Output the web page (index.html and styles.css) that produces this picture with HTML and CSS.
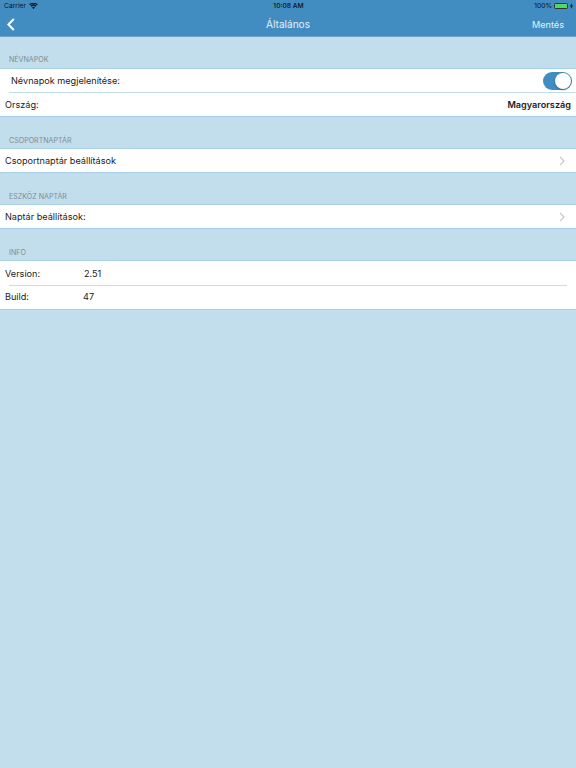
FILE: index.html
```html
<!DOCTYPE html>
<html lang="hu">
<head>
<meta charset="utf-8">
<title>Általános</title>
<link rel="stylesheet" href="styles.css">
</head>
<body>
<header class="top">
  <div class="status">
    <div class="status-left">
      <span>Carrier</span>
      <svg class="wifi" width="9" height="6" viewBox="0 0 10 7"><path d="M5 7 3.4 5.2a2.3 2.3 0 0 1 3.2 0zM2.6 4.4 1.5 3.2a5 5 0 0 1 7 0L7.4 4.4a3.5 3.5 0 0 0-4.8 0zM.9 2.6 0 1.6a7.2 7.2 0 0 1 10 0l-.9 1a6 6 0 0 0-8.2 0z" fill="#111"/></svg>
    </div>
    <div class="status-time">10:08 AM</div>
    <div class="status-right">
      <span>100%</span>
      <span class="battery"><span class="battery-fill"></span></span>
      <svg width="3" height="6" viewBox="0 0 3 6"><path d="M1.8 0 0 3.4h1.2L1 6l2-3.6H1.7z" fill="#111"/></svg>
    </div>
  </div>
  <nav class="nav">
    <svg class="back" width="8" height="13" viewBox="0 0 8 13"><path d="M6.8 1 1.4 6.5l5.4 5.5" fill="none" stroke="#fff" stroke-width="2"/></svg>
    <div class="nav-title">Általános</div>
    <div class="nav-action">Mentés</div>
  </nav>
</header>
<main>
  <h2 class="label label-first">NÉVNAPOK</h2>
  <section class="group">
    <div class="row row-indent">
      <span>Névnapok megjelenítése:</span>
      <span class="switch"><span class="knob"></span></span>
    </div>
    <div class="row row-divided">
      <span>Ország:</span>
      <strong class="value">Magyarország</strong>
    </div>
  </section>
  <h2 class="label">CSOPORTNAPTÁR</h2>
  <section class="group">
    <div class="row">
      <span>Csoportnaptár beállítások</span>
      <svg class="chev" width="6" height="10" viewBox="0 0 6 10"><path d="M1 1l4 4-4 4" fill="none" stroke="#c7c7cc" stroke-width="1.2"/></svg>
    </div>
  </section>
  <h2 class="label">ESZKÖZ NAPTÁR</h2>
  <section class="group">
    <div class="row">
      <span>Naptár beállítások:</span>
      <svg class="chev" width="6" height="10" viewBox="0 0 6 10"><path d="M1 1l4 4-4 4" fill="none" stroke="#c7c7cc" stroke-width="1.2"/></svg>
    </div>
  </section>
  <h2 class="label">INFO</h2>
  <section class="group">
    <div class="row row-info row-tall">
      <span class="info-key">Version:</span>
      <span class="info-version">2.51</span>
    </div>
    <div class="row row-info row-divided-short">
      <span class="info-key">Build:</span>
      <span class="info-build">47</span>
    </div>
  </section>
</main>
</body>
</html>
```
FILE: styles.css
```css
* { box-sizing: border-box; }
html, body { margin: 0; height: 100%; }
body {
  background: #c2deec;
  font-family: Inter, "Liberation Sans", sans-serif;
  color: #222;
  overflow: hidden;
}
.top {
  height: 37px;
  background: #418cc0;
  border-bottom: 1px solid #6aa5cd;
}
.status {
  height: 12px;
  display: grid;
  grid-template-columns: 1fr auto 1fr;
  align-items: center;
  padding: 0 3px 0 4px;
  font-size: 6.7px;
  color: #111;
}
.status-left { display: flex; align-items: center; gap: 3px; }
.status-right { display: flex; align-items: center; justify-content: flex-end; gap: 2px; }
.status-time { font-weight: 500; }
.battery {
  width: 14px;
  height: 6px;
  border: 1px solid #333;
  border-radius: 1.5px;
  display: block;
}
.battery-fill { display: block; height: 100%; background: #4cd964; }
.nav {
  height: 24px;
  position: relative;
  display: flex;
  align-items: center;
  justify-content: space-between;
  padding: 0 12px 0 7px;
  color: #e6f1f8;
  font-size: 9.15px;
}
.back { display: block; }
.nav-title {
  position: absolute;
  left: 0;
  right: 0;
  text-align: center;
  font-size: 10.1px;
  margin-top: -1px;
  pointer-events: none;
}
.label {
  margin: 0;
  height: 31px;
  padding: 18px 0 0 9px;
  font-size: 7.1px;
  line-height: 12px;
  font-weight: 400;
  color: #808c95;
}
.label-first { padding-top: 17px; }
.group {
  background: #fff;
  border-top: 1px solid #a9cfe6;
  border-bottom: 1px solid #a9cfe6;
}
.row {
  height: 23px;
  display: flex;
  align-items: center;
  justify-content: space-between;
  padding: 0 5px 0 5px;
  font-size: 9.15px;
  position: relative;
}
.row-indent { padding-left: 11px; padding-right: 4px; }
.row-tall { height: 24px; }
.row-divided, .row-divided-short { height: 24px; }
.row-divided { padding-top: 1px; }
.row-divided-short { padding-bottom: 1px; }
.row-divided::before, .row-divided-short::before {
  content: "";
  position: absolute;
  top: 0;
  height: 1px;
  background: #c2deec;
}
.row-divided::before { left: 9px; right: 0; }
.row-divided-short::before { left: 9px; right: 9px; }
.value { font-weight: 600; }
.switch {
  width: 29px;
  height: 18px;
  background: #418cc0;
  border-radius: 9px;
  position: relative;
  display: block;
}
.knob {
  position: absolute;
  top: 1px;
  right: 1px;
  width: 16px;
  height: 16px;
  border-radius: 50%;
  background: #fff;
  box-shadow: 0 1px 2px rgba(0,0,0,.3);
}
.chev { margin-right: 6px; }
.row-info { justify-content: flex-start; }
.info-key { width: 78px; }
.info-version { margin-left: 1px; }
```
